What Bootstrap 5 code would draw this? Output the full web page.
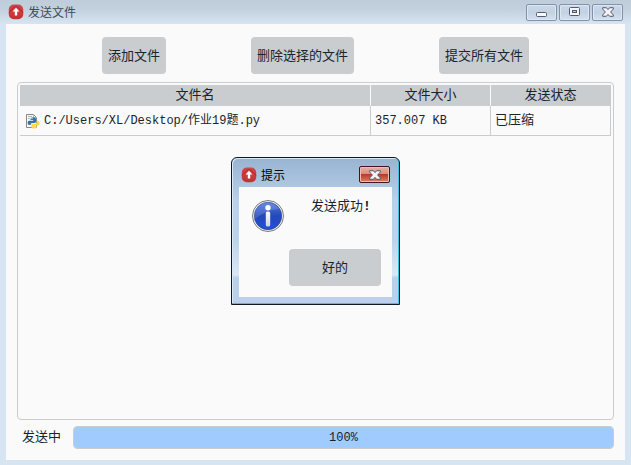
<!DOCTYPE html>
<html lang="zh-CN">
<head>
<meta charset="utf-8">
<meta name="viewport" content="width=device-width, initial-scale=1">
<title>发送文件</title>
<link href="https://cdn.jsdelivr.net/npm/bootstrap@5.3.0/dist/css/bootstrap.min.css" rel="stylesheet">
<style>
  body { font: 13px/20px "Liberation Mono", "Noto Sans CJK SC", monospace; color: #19232d; }
  .frame { background: #d7e4f2; padding: 0 6px 5px; }
  .titlebar { height: 24px; margin: 0 -6px; padding: 0 8px; background: linear-gradient(#bfcddb, #c3d1df 40%, #d7e4f2); }
  .caption { font: 12px/20px "Noto Sans CJK SC", sans-serif; color: #3e4a56; }
  .win-btns { gap: 2px; }
  .win-btn { width: 31px; height: 17px; padding: 0; border: 1px solid #8291b0; border-radius: 2px; background: linear-gradient(#cad8e6, #c3d2e2 50%, #d3e0ee); box-shadow: inset 0 0 0 1px #dce7f2; }
  .win-close { background: linear-gradient(#e7b0a4, #d98a7c 48%, #b83c27 50%, #d98069); border-color: #431422; box-shadow: inset 0 0 0 1px #edbdb3; }
  .win-btn svg { display: block; margin: 0 auto; }
  .client { background: #fafafa; }
  .main { padding: 13px 11px 11px; }
  .tool { min-height: 37px; padding: 0 6px 2px; border: 0; border-radius: 4px; background: #c9cdd0; color: #19232d; font: 13px/20px "Noto Sans CJK SC", sans-serif; }
  .files { margin-top: 8px; padding: 2px; border: 1px solid #c9cdd0; border-radius: 4px; }
  .file-table { width: 100%; table-layout: fixed; border-collapse: separate; border-spacing: 0; }
  .file-table th { height: 21px; padding: 0; background: #c9cdd0; font-weight: 400; text-align: center; border-right: 1px solid #fafafa; }
  .file-table th:last-child { border-right-color: #c9cdd0; }
  .file-table td { height: 30px; padding: 0 4px; border: solid #c9cdd0; border-width: 0 1px 1px 0; white-space: nowrap; }
  .file-table .latin { font-size: 12px; }
  .c-name { width: 351px; }
  .c-size { width: 120px; }
  .send-row { margin-top: 6px; padding-left: 5px; gap: 12px; }
  .send-bar { height: 23px; border: 1px solid #c9cdd0; border-radius: 4px; background: #fafafa; --bs-progress-bar-bg: #a0cbff; --bs-progress-bar-color: #19232d; font-size: 12px; }
  .overlay { padding-bottom: 3px; }
  .notice { width: 169px; padding: 0 7px 7px; border: 1px solid #101820; border-radius: 6px 6px 0 0; background: linear-gradient(#98b4d1, #b9d1ea 30%, #bbd2ea 55%, #dbe7f4 80%, #b9d1ea 82%); box-shadow: inset -1px -1px 0 #3cc4dc, inset 1px 1px 0 #dbe8f5; }
  .notice-title { height: 29px; padding: 4px 2px 0; }
  .notice-title .caption { color: #000; }
  .notice-body { padding: 10px 11px 11px 12px; }
  .notice-body .tool { width: 92px; }
  .notice-msg { min-height: 52px; }
  .info-icon { margin-top: 2px; }
</style>
</head>
<body>
<div class="frame position-relative d-flex flex-column min-vh-100">
  <svg width="0" height="0" class="position-absolute" aria-hidden="true">
    <defs>
      <linearGradient id="red" x2="0" y2="1"><stop stop-color="#c9484a"/><stop offset=".5" stop-color="#d23a3d"/><stop offset="1" stop-color="#bf3034"/></linearGradient>
      <linearGradient id="blue" x2="0" y2="1"><stop stop-color="#4c78df"/><stop offset=".5" stop-color="#2348bb"/><stop offset="1" stop-color="#2550d8"/></linearGradient>
      <linearGradient id="silver" x2="0" y2="1"><stop stop-color="#fff"/><stop offset="1" stop-color="#cfd3dc"/></linearGradient>
      <symbol id="logo" viewBox="0 0 16 16">
        <rect x=".8" y=".6" width="14.4" height="14.6" rx="5" fill="url(#red)"/>
        <path d="M1 8.8Q1.6 6.3 4 6 4.8 2.6 8 2.6T12 6Q14.4 6.3 15 8.8" fill="none" stroke="#a5262b" stroke-width=".8"/>
        <path d="M8 3.8 11.4 7.6H9.2V11.4H6.8V7.6H4.6Z" fill="#fff"/>
      </symbol>
      <symbol id="cross" viewBox="0 0 12 10">
        <path d="M.7.7H4.3L6 2.6 7.7.7H11.3V2.1L8.6 5 11.3 7.9V9.3H7.7L6 7.4 4.3 9.3H.7V7.9L3.4 5 .7 2.1Z" fill="#f3f3f5" stroke="#555c72"/>
      </symbol>
    </defs>
  </svg>

  <header class="titlebar d-flex align-items-center">
    <svg width="16" height="16" aria-hidden="true"><use href="#logo"/></svg>
    <span class="caption ms-1 me-auto">发送文件</span>
    <div class="win-btns d-flex">
      <button type="button" class="win-btn" aria-label="最小化"><svg width="12" height="10" aria-hidden="true"><rect x=".5" y="5.5" width="10" height="4" rx="1" fill="#f8f9fa" stroke="#535a72"/></svg></button>
      <button type="button" class="win-btn" aria-label="最大化"><svg width="12" height="10" aria-hidden="true"><rect x=".5" y=".5" width="10" height="8" rx="1" fill="#f5f6f8" stroke="#535a72"/><rect x="3.5" y="3.5" width="4" height="2" fill="#b9cbe0" stroke="#535a72"/></svg></button>
      <button type="button" class="win-btn" aria-label="关闭"><svg width="12" height="10" aria-hidden="true"><use href="#cross"/></svg></button>
    </div>
  </header>

  <main class="client main flex-grow-1 d-flex flex-column">
    <div class="d-flex justify-content-evenly">
      <button type="button" class="tool">添加文件</button>
      <button type="button" class="tool">删除选择的文件</button>
      <button type="button" class="tool">提交所有文件</button>
    </div>

    <div class="files flex-grow-1">
      <table class="file-table">
        <colgroup><col class="c-name"><col class="c-size"><col></colgroup>
        <thead><tr><th scope="col">文件名</th><th scope="col">文件大小</th><th scope="col">发送状态</th></tr></thead>
        <tbody>
          <tr>
            <td class="latin">
              <div class="d-flex align-items-center gap-1">
                <svg class="flex-shrink-0" width="16" height="16" viewBox="0 0 16 16" aria-hidden="true">
                  <path d="M2.5 1.5H9.5L12.5 4.5V14.5H2.5Z" fill="#f7f7f5" stroke="#85898a"/>
                  <path d="M9.5 1.5V4.5H12.5M4 3.5H8M4 5.5H6" fill="none" stroke="#b4b8b8"/>
                  <path d="M6.5 6Q6.5 4.3 9.3 4.3T12 6V8.6Q12 10 10.5 10H8Q6.5 10 6.5 12H5.3Q3.6 12 3.6 9.8T5.3 7.7H9.2V7H6.5Z" fill="#3473a8"/>
                  <path d="M12.8 7.8H13.8Q15.6 8 15.6 10.2T13.8 12.6H10.4V13.2H12.8V14Q12.8 15.6 10 15.6T7.3 14V12Q7.3 10.8 8.7 10.8H11.2Q12.8 10.6 12.8 9Z" fill="#ffd93f"/>
                  <circle cx="8" cy="5.6" r=".6" fill="#fff"/>
                </svg>
                <span>C:/Users/XL/Desktop/作业19题.py</span>
              </div>
            </td>
            <td class="latin">357.007 KB</td>
            <td>已压缩</td>
          </tr>
        </tbody>
      </table>
    </div>

    <div class="send-row d-flex align-items-center">
      <span id="send-label">发送中</span>
      <div class="send-bar progress flex-grow-1" role="progressbar" aria-labelledby="send-label" aria-valuenow="100" aria-valuemin="0" aria-valuemax="100">
        <div class="progress-bar" style="width:100%">100%</div>
      </div>
    </div>
  </main>

  <div class="overlay position-absolute top-0 start-0 w-100 h-100 d-flex align-items-center justify-content-center">
    <section class="notice" role="dialog" aria-labelledby="notice-title">
      <div class="notice-title d-flex align-items-center">
        <svg width="16" height="16" aria-hidden="true"><use href="#logo"/></svg>
        <span id="notice-title" class="caption ms-1 me-auto">提示</span>
        <button type="button" class="win-btn win-close" aria-label="关闭"><svg width="12" height="10" aria-hidden="true"><use href="#cross"/></svg></button>
      </div>
      <div class="client notice-body">
        <div class="notice-msg d-flex">
          <svg class="info-icon flex-shrink-0" width="34" height="34" viewBox="0 0 34 34" aria-hidden="true">
            <circle cx="17" cy="17" r="15.5" fill="#f4f4f4" stroke="#777b80"/>
            <circle cx="17" cy="17" r="13.7" fill="url(#blue)" stroke="#29418c" stroke-width=".7"/>
            <path d="M3.8 20A13.2 13.2 0 0 1 28 10Q15 11 3.8 20Z" fill="#fff" opacity=".14"/>
            <circle cx="17" cy="8.7" r="2.7" fill="#fff"/>
            <rect x="14.8" y="12.5" width="4.4" height="15" rx="1.6" fill="url(#silver)"/>
          </svg>
          <div class="flex-grow-1 text-center ps-3">发送成功<b>!</b></div>
        </div>
        <div class="d-flex justify-content-end"><button type="button" class="tool">好的</button></div>
      </div>
    </section>
  </div>
</div>
<script src="https://cdn.jsdelivr.net/npm/bootstrap@5.3.0/dist/js/bootstrap.bundle.min.js"></script>
</body>
</html>
